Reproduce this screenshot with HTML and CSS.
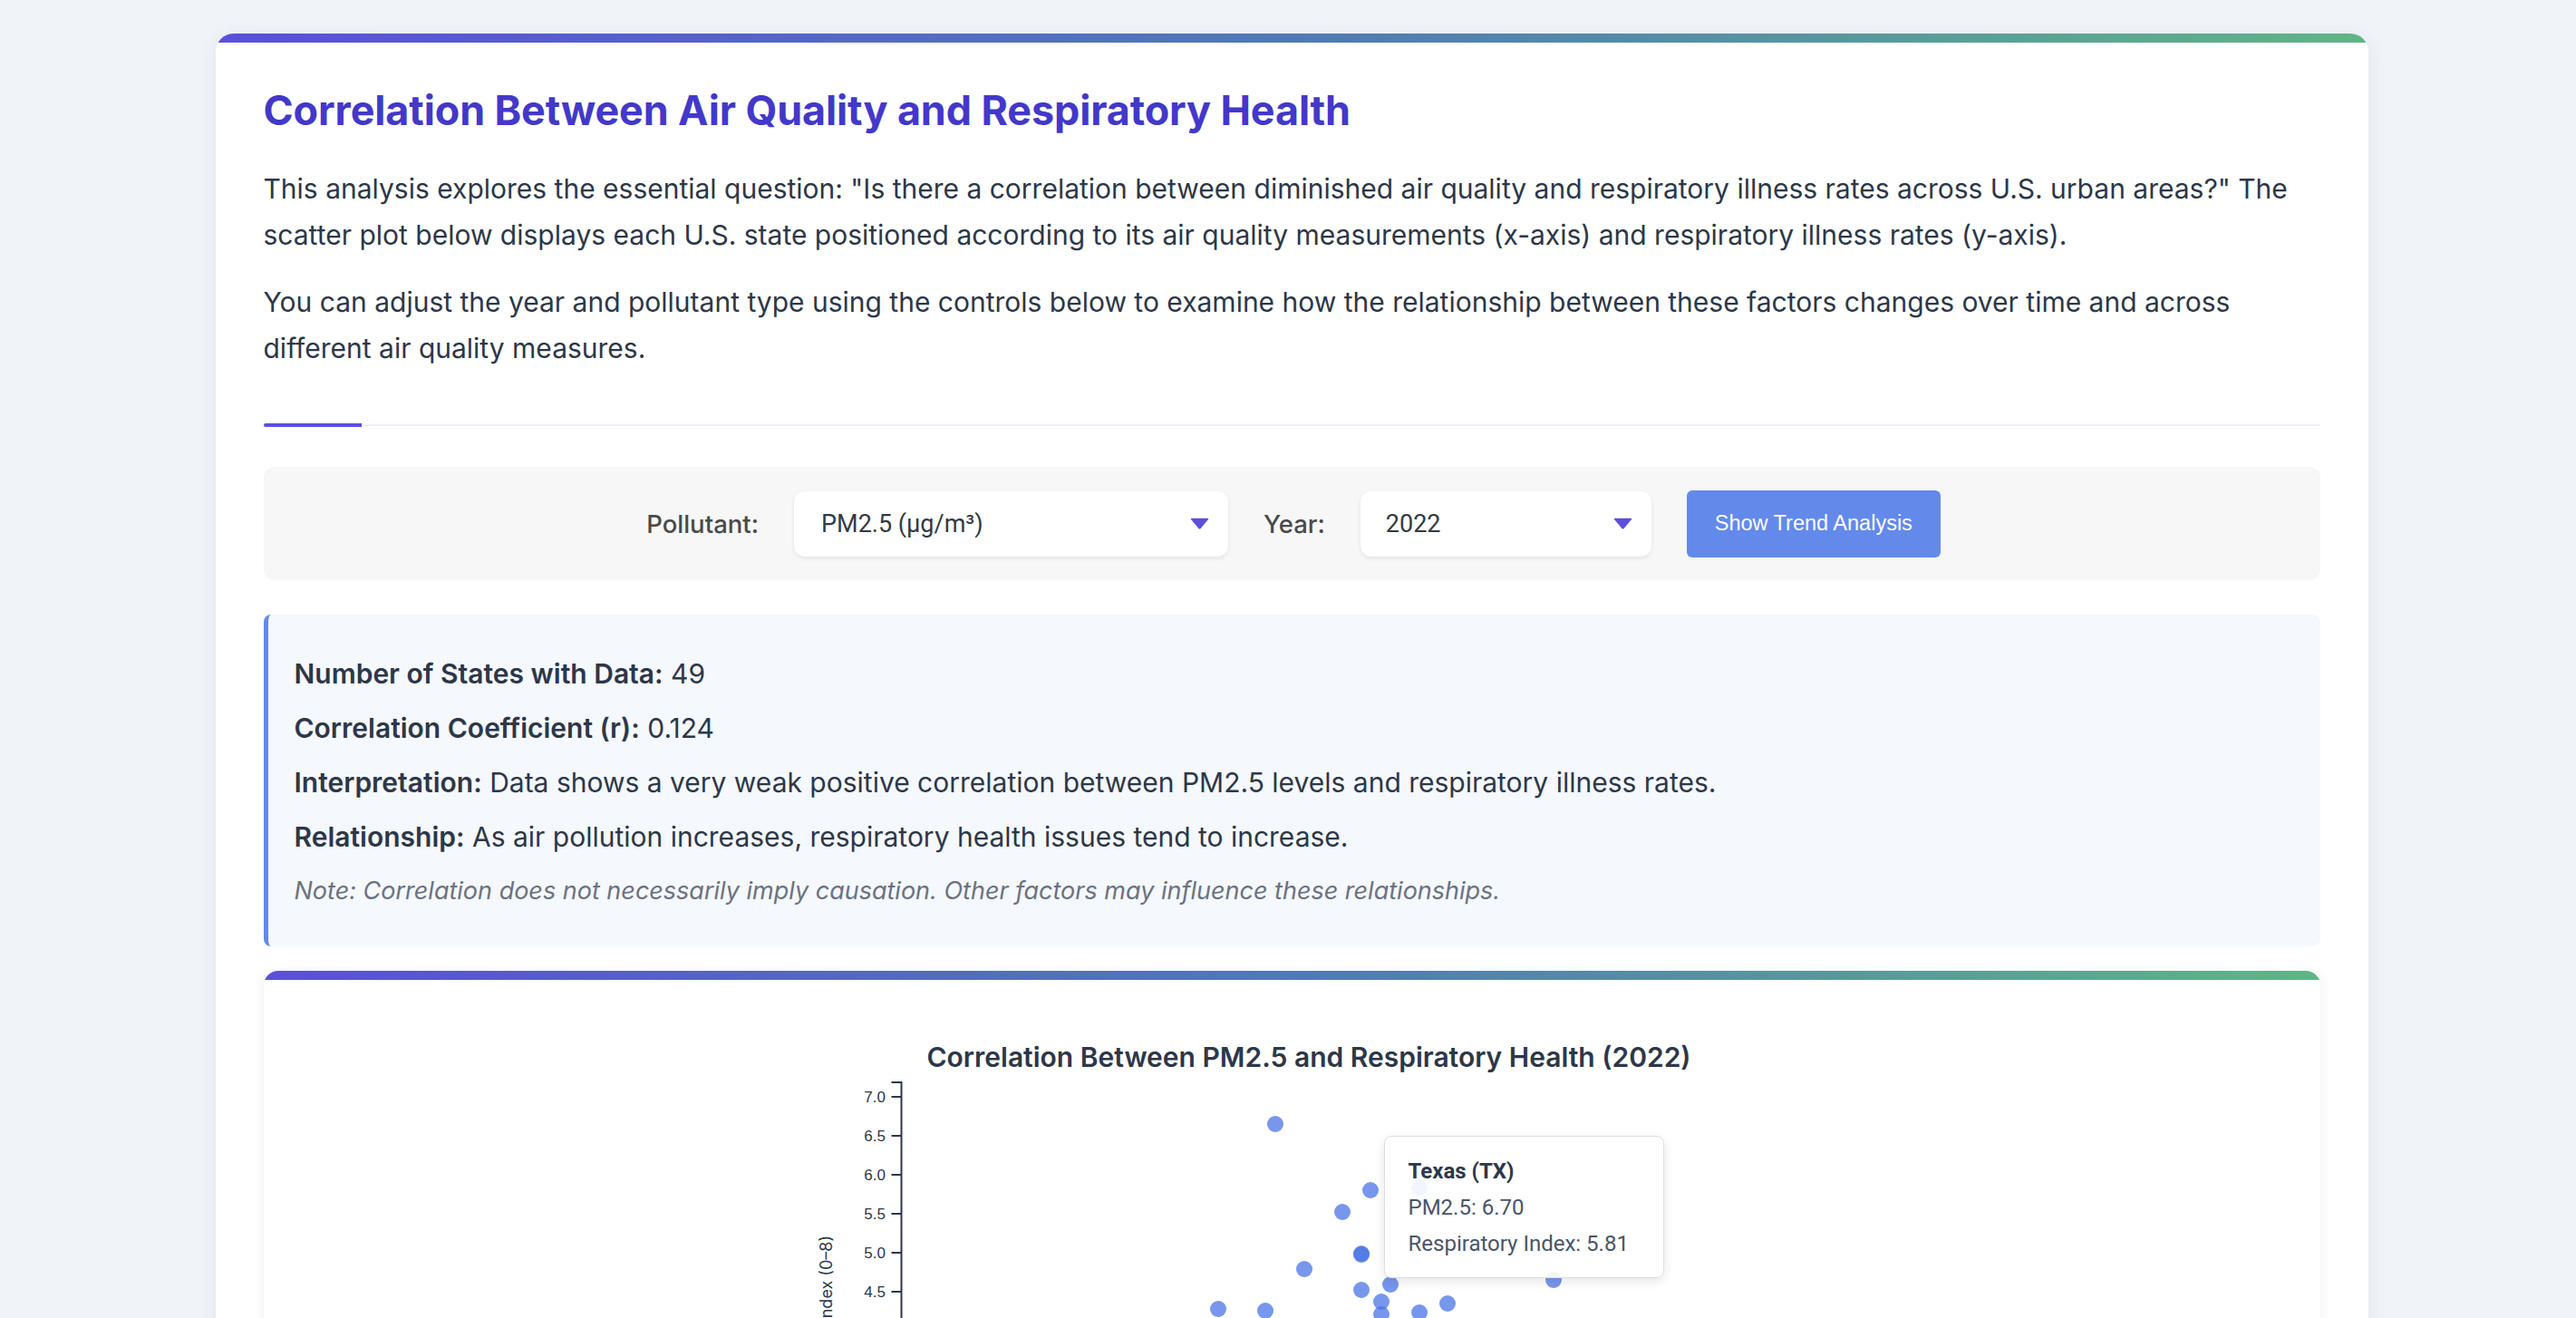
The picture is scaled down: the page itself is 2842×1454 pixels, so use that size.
FILE: index.html
```html
<!DOCTYPE html>
<html lang="en">
<head>
<meta charset="utf-8">
<title>Correlation Between Air Quality and Respiratory Health</title>
<link rel="stylesheet" href="styles.css">
</head>
<body>
<main class="card">
  <div class="card-bar"></div>
  <div class="card-body">
    <h1 class="title">Correlation Between Air Quality and Respiratory Health</h1>
    <p class="intro intro-first">This analysis explores the essential question: "Is there a correlation between diminished air quality and respiratory illness rates across U.S. urban areas?" The scatter plot below displays each U.S. state positioned according to its air quality measurements (x-axis) and respiratory illness rates (y-axis).</p>
    <p class="intro">You can adjust the year and pollutant type using the controls below to examine how the relationship between these factors changes over time and across different air quality measures.</p>
    <div class="divider"></div>

    <div class="controls">
      <label class="ctrl-label">Pollutant:</label>
      <div class="select select-pollutant">
        <span class="select-text">PM2.5 (µg/m³)</span>
        <svg class="select-arrow" width="21" height="13" viewBox="0 0 21 13"><path d="M1.5 0.8 H19.5 Q20.8 0.8 20 2 L11.6 12 Q10.5 13 9.4 12 L1 2 Q0.2 0.8 1.5 0.8 Z" fill="#5b4fdc"/></svg>
      </div>
      <label class="ctrl-label">Year:</label>
      <div class="select select-year">
        <span class="select-text">2022</span>
        <svg class="select-arrow" width="21" height="13" viewBox="0 0 21 13"><path d="M1.5 0.8 H19.5 Q20.8 0.8 20 2 L11.6 12 Q10.5 13 9.4 12 L1 2 Q0.2 0.8 1.5 0.8 Z" fill="#5b4fdc"/></svg>
      </div>
      <button class="btn">Show Trend Analysis</button>
    </div>

    <section class="stats">
      <p class="stat"><strong>Number of States with Data:</strong> 49</p>
      <p class="stat"><strong>Correlation Coefficient (r):</strong> 0.124</p>
      <p class="stat"><strong>Interpretation:</strong> Data shows a very weak positive correlation between PM2.5 levels and respiratory illness rates.</p>
      <p class="stat"><strong>Relationship:</strong> As air pollution increases, respiratory health issues tend to increase.</p>
      <p class="note">Note: Correlation does not necessarily imply causation. Other factors may influence these relationships.</p>
    </section>

    <section class="chart-card">
      <div class="card-bar"></div>
      <svg class="chart" width="2269" height="820">
        <text class="chart-title" x="1153" y="96" text-anchor="middle">Correlation Between PM2.5 and Respiratory Health (2022)</text>
        <g class="axis">
          <path d="M692.5 113 H703.5 V700 H692.5" fill="none" stroke="#2d3748" stroke-width="2"/>
          <g class="ticks" stroke="#2d3748" stroke-width="2">
            <line x1="692.5" x2="703.5" y1="129" y2="129"/>
            <line x1="692.5" x2="703.5" y1="172" y2="172"/>
            <line x1="692.5" x2="703.5" y1="215" y2="215"/>
            <line x1="692.5" x2="703.5" y1="258" y2="258"/>
            <line x1="692.5" x2="703.5" y1="301" y2="301"/>
            <line x1="692.5" x2="703.5" y1="344" y2="344"/>
            <line x1="692.5" x2="703.5" y1="387" y2="387"/>
            <line x1="692.5" x2="703.5" y1="430" y2="430"/>
            <line x1="692.5" x2="703.5" y1="473" y2="473"/>
          </g>
          <g class="tick-labels" text-anchor="end">
            <text x="686" y="135">7.0</text>
            <text x="686" y="178">6.5</text>
            <text x="686" y="221">6.0</text>
            <text x="686" y="264">5.5</text>
            <text x="686" y="307">5.0</text>
            <text x="686" y="350">4.5</text>
            <text x="686" y="393">4.0</text>
            <text x="686" y="436">3.5</text>
            <text x="686" y="479">3.0</text>
          </g>
          <text class="axis-label" transform="translate(627,282) rotate(-90)" text-anchor="end">Respiratory Index (0–8)</text>
        </g>
        <g class="dots">
          <circle cx="1116" cy="159" r="9"/>
          <circle cx="1221" cy="232" r="9"/>
          <circle cx="1275" cy="229" r="9"/>
          <circle cx="1190" cy="256" r="9"/>
          <circle cx="1211" cy="302" r="9"/>
          <circle cx="1211" cy="303" r="9"/>
          <circle cx="1148" cy="319" r="9"/>
          <circle cx="1211" cy="342" r="9"/>
          <circle cx="1243" cy="336" r="9"/>
          <circle cx="1233" cy="355" r="9"/>
          <circle cx="1423" cy="331" r="9"/>
          <circle cx="1053" cy="363" r="9"/>
          <circle cx="1105" cy="365" r="9"/>
          <circle cx="1306" cy="357" r="9"/>
          <circle cx="1275" cy="367" r="9"/>
          <circle cx="1233" cy="369" r="9"/>
          <circle cx="1010" cy="402" r="9"/>
          <circle cx="1160" cy="412" r="9"/>
          <circle cx="1290" cy="422" r="9"/>
          <circle cx="1184" cy="452" r="9"/>
          <circle cx="1352" cy="433" r="9"/>
          <circle cx="1098" cy="482" r="9"/>
          <circle cx="1252" cy="472" r="9"/>
        </g>
      </svg>
      <div class="tooltip">
        <div class="tip-title">Texas (TX)</div>
        <div class="tip-line">PM2.5: 6.70</div>
        <div class="tip-line">Respiratory Index: 5.81</div>
      </div>
    </section>
  </div>
</main>
</body>
</html>
```
FILE: styles.css
```css
html, body {
  background: #f0f3f8;
}
body {
  margin: 0;
  padding: 37px 0 0 8px;
  font-family: "Inter", "Open Sans", sans-serif;
  color: #2d3748;
}

.card {
  width: 2375px;
  margin: 0 auto;
  background: #ffffff;
  border-radius: 20px;
  overflow: hidden;
  box-shadow: 0 4px 22px rgba(30, 41, 80, 0.07);
}

.card-bar {
  height: 10px;
  background: linear-gradient(90deg, #5a4fdc 0%, #4f79b6 50%, #5fb585 100%);
}

.card-body {
  padding: 48px 53px 60px;
}

.title {
  margin: 0;
  font-size: 44.9px;
  line-height: 54px;
  font-weight: 700;
  color: #4338ca;
  letter-spacing: -0.1px;
}

.intro {
  margin: 23px 0 0;
  font-size: 30px;
  line-height: 51px;
  font-weight: 400;
  color: #2d3748;
}
.intro-first {
  margin-top: 34px;
}

.divider {
  margin-top: 57px;
  height: 4px;
  background:
    linear-gradient(#5b50e0, #5b50e0) left center / 108px 4px no-repeat,
    linear-gradient(#eef0f8, #eef0f8) left center / 100% 2px no-repeat;
  border-radius: 2px;
}

.controls {
  margin-top: 44px;
  height: 125px;
  background: #f7f7f7;
  border-radius: 12px;
  display: flex;
  align-items: center;
  justify-content: center;
  gap: 39px;
  padding-left: 4px;
}

.ctrl-label {
  font-size: 27.5px;
  font-weight: 500;
  color: #4a4a4a;
}

.select {
  height: 72px;
  box-sizing: border-box;
  background: #ffffff;
  border-radius: 12px;
  box-shadow: 0 2px 4px rgba(60, 60, 110, 0.1);
  display: flex;
  align-items: center;
  justify-content: space-between;
  padding: 0 21px 0 30px;
  font-family: "Roboto", "Liberation Sans", sans-serif;
  font-size: 27px;
  color: #333a44;
}
.select-pollutant { width: 479px; }
.select-year { width: 321px; padding-left: 28px; }
.select-arrow { display: block; flex: none; }

.btn {
  width: 280px;
  height: 74px;
  border: none;
  border-radius: 6px;
  background: #6389eb;
  color: #ffffff;
  font-family: "Liberation Sans", Arial, sans-serif;
  font-size: 23.5px;
  padding: 0;
}

.stats {
  margin-top: 38px;
  background: #f5f8fd;
  border-left: 5px solid #6389eb;
  border-radius: 8px;
  padding: 42.5px 30px 41.5px 29px;
}
.stat {
  margin: 0 0 15px;
  font-size: 30px;
  line-height: 45px;
  color: #2d3748;
}
.stat strong {
  font-weight: 600;
}
.stat:nth-of-type(4) {
  margin-bottom: 17px;
}
.note {
  margin: 0;
  font-size: 27px;
  line-height: 40px;
  font-style: italic;
  color: #6b7280;
}

.chart-card {
  position: relative;
  margin-top: 27px;
  background: #ffffff;
  border-radius: 16px;
  overflow: hidden;
  box-shadow: 0 3px 14px rgba(30, 41, 80, 0.09);
}
.chart { display: block; }
.chart-title {
  font-family: "Inter", "Open Sans", sans-serif;
  font-weight: 600;
  font-size: 30px;
  fill: #2d3748;
}
.tick-labels text {
  font-family: "Liberation Sans", Arial, sans-serif;
  font-size: 17px;
  fill: #2d3748;
}
.axis-label {
  font-family: "Inter", "Open Sans", sans-serif;
  font-size: 18px;
  fill: #2d3748;
}
.dots circle {
  fill: #4a74e6;
  fill-opacity: 0.75;
}

.tooltip {
  position: absolute;
  left: 1236px;
  top: 182px;
  width: 309px;
  box-sizing: border-box;
  padding: 18px 26px 17px;
  background: rgba(255, 255, 255, 0.9);
  border: 1px solid #dedede;
  border-radius: 8px;
  box-shadow: 0 4px 12px rgba(0, 0, 0, 0.1);
  font-family: "Roboto", "Liberation Sans", sans-serif;
  font-size: 24px;
  line-height: 40px;
  color: #4a5568;
}
.tip-title {
  font-weight: 700;
  color: #2d3748;
}
```
